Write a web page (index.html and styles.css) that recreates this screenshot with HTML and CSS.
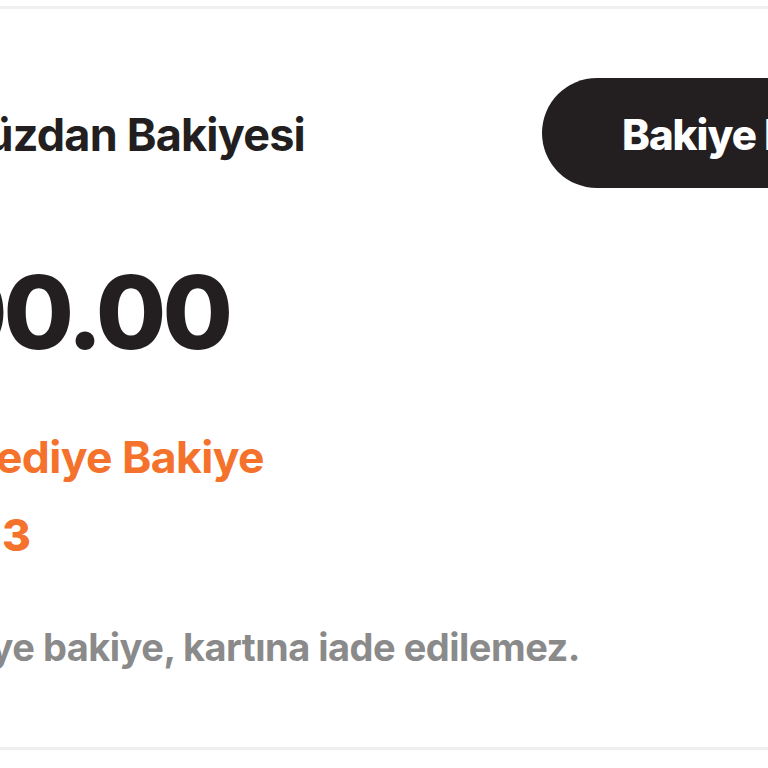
FILE: index.html
```html
<!DOCTYPE html>
<html lang="tr">
<head>
<meta charset="utf-8">
<link rel="stylesheet" href="styles.css">
</head>
<body>
<div class="card">
  <div class="head">
    <div class="title-wrap"><span class="title">Cüzdan Bakiyesi</span></div>
    <button class="btn">Bakiye Ekle</button>
  </div>
  <div class="line amount"><span>₺100.00</span></div>
  <div class="line gift-title"><span>Hediye Bakiye</span></div>
  <div class="line gift-amount"><span>₺3</span></div>
  <div class="line note"><span>Hediye bakiye, kartına iade edilemez.</span></div>
</div>
</body>
</html>
```
FILE: styles.css
```css
html, body {
  margin: 0;
  padding: 0;
  background: #fff;
  width: 768px;
  height: 768px;
  overflow: hidden;
}
body {
  font-family: "Inter", "Noto Sans", sans-serif;
}
.card {
  margin-top: 6px;
  border-top: 3px solid #efefef;
  border-bottom: 3px solid #efefef;
  height: 744px;
  box-sizing: border-box;
  overflow: hidden;
}
.head {
  display: flex;
  align-items: center;
  margin-top: 69px;
  height: 110px;
}
.title-wrap {
  width: 305px;
  flex-shrink: 0;
  display: flex;
  justify-content: flex-end;
  padding-top: 2px;
}
.title {
  font-size: 45px;
  font-weight: 700;
  color: #231f20;
  line-height: 1;
  white-space: nowrap;
  letter-spacing: -0.8px;
}
.btn {
  margin-left: auto;
  margin-right: -260px;
  height: 110px;
  width: 486px;
  border: none;
  border-radius: 55px;
  background: #231f20;
  color: #fff;
  font-family: inherit;
  font-size: 42px;
  font-weight: 800;
  line-height: 1;
  text-align: left;
  padding: 3px 0 0 80px;
  white-space: nowrap;
  flex-shrink: 0;
  letter-spacing: -1px;
}
.line {
  display: flex;
  justify-content: flex-end;
  line-height: 1;
  white-space: nowrap;
}
.amount {
  width: 229px;
  margin-top: 73px;
  font-size: 102px;
  font-weight: 800;
  color: #231f20;
  letter-spacing: -4px;
}
.gift-title {
  width: 264px;
  margin-top: 72px;
  font-size: 44.5px;
  font-weight: 700;
  color: #f4722b;
  letter-spacing: -0.6px;
}
.gift-amount {
  width: 31px;
  margin-top: 33px;
  font-size: 44px;
  font-weight: 800;
  color: #f4722b;
}
.note {
  width: 580px;
  margin-top: 71px;
  font-size: 38px;
  font-weight: 700;
  color: #8a8a8a;
  letter-spacing: -0.5px;
}
```
